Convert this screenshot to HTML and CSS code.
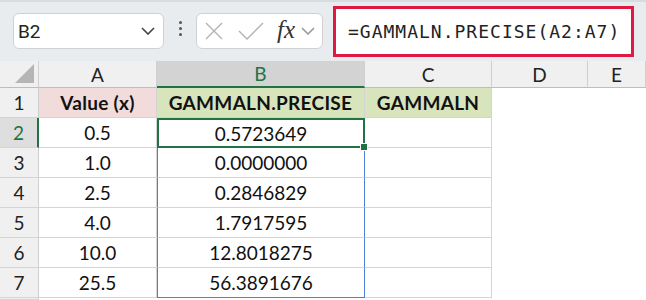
FILE: index.html
```html
<!DOCTYPE html>
<html lang="en">
<head>
    <meta charset="UTF-8">
    <title>GAMMALN.PRECISE</title>
    <link rel="stylesheet" href="styles.css">
</head>
<body>
    <div class="toolbar">
        <div class="namebox">
            <span class="cellref">B2</span>
            <svg class="chev" width="14" height="8" viewBox="0 0 14 8"><path d="M1 1 L7 7 L13 1" /></svg>
        </div>
        <div class="dots"><i></i><i></i><i></i></div>
        <div class="fxbox">
            <svg class="ico" width="18" height="18" viewBox="0 0 18 18"><path d="M1 1 L17 17 M17 1 L1 17" /></svg>
            <svg class="ico" width="26" height="18" viewBox="0 0 26 18"><path d="M1 9 L9 17 L25 1" /></svg>
            <span class="fx">fx</span>
            <svg class="chev light" width="14" height="8" viewBox="0 0 14 8"><path d="M1 1 L7 7 L13 1" /></svg>
        </div>
        <div class="formula">=GAMMALN.PRECISE(A2:A7)</div>
    </div>

    <div class="sheet">
        <div class="hd corner"><svg width="20" height="20" viewBox="0 0 20 20"><path d="M19 0 L19 19 L0 19 Z" /></svg></div>
        <div class="hd">A</div>
        <div class="hd sel">B</div>
        <div class="hd">C</div>
        <div class="hd">D</div>
        <div class="hd">E</div>

        <div class="rh">1</div>
        <div class="c bold pink">Value (x)</div>
        <div class="c bold green">GAMMALN.PRECISE</div>
        <div class="c bold green">GAMMALN</div>
        <div class="e"></div>
        <div class="e"></div>

        <div class="rh sel">2</div>
        <div class="c">0.5</div>
        <div class="c active">0.5723649<span class="handle"></span></div>
        <div class="c"></div>
        <div class="e"></div>
        <div class="e"></div>

        <div class="rh">3</div>
        <div class="c">1.0</div>
        <div class="c range">0.0000000</div>
        <div class="c"></div>
        <div class="e"></div>
        <div class="e"></div>

        <div class="rh">4</div>
        <div class="c">2.5</div>
        <div class="c range">0.2846829</div>
        <div class="c"></div>
        <div class="e"></div>
        <div class="e"></div>

        <div class="rh">5</div>
        <div class="c">4.0</div>
        <div class="c range">1.7917595</div>
        <div class="c"></div>
        <div class="e"></div>
        <div class="e"></div>

        <div class="rh">6</div>
        <div class="c">10.0</div>
        <div class="c range">12.8018275</div>
        <div class="c"></div>
        <div class="e"></div>
        <div class="e"></div>

        <div class="rh">7</div>
        <div class="c">25.5</div>
        <div class="c range last">56.3891676</div>
        <div class="c"></div>
        <div class="e"></div>
        <div class="e"></div>

        <div class="rh"></div>
        <div class="e"></div>
        <div class="e"></div>
        <div class="e"></div>
        <div class="e"></div>
        <div class="e"></div>
    </div>
</body>
</html>
```

FILE: styles.css
```css
* {
    box-sizing: border-box;
}
html, body {
    height: 300px;
    overflow: hidden;
}
body {
    margin: 0;
    background: #fff;
    font-family: Lato, "Noto Sans", sans-serif;
}

/* formula bar */
.toolbar {
    height: 61px;
    background: #e9ecef;
    border-top: 2px solid #d9dcdf;
    display: flex;
    align-items: flex-start;
    padding: 4px 0 0 13px;
}
.namebox {
    margin-top: 7px;
    width: 151px;
    height: 36px;
    background: #fff;
    border: 1px solid #cfd2d5;
    border-radius: 6px;
    display: flex;
    align-items: center;
    justify-content: space-between;
    padding: 0 8px 0 4px;
}
.cellref {
    font-family: Roboto, "Liberation Sans", sans-serif;
    font-size: 19px;
    color: #222;
}
.chev path {
    fill: none;
    stroke: #444;
    stroke-width: 1.6;
}
.chev.light path {
    stroke: #9a9a9a;
}
.dots {
    width: 32px;
    height: 44px;
    display: flex;
    flex-direction: column;
    align-items: center;
    justify-content: center;
    gap: 3px;
}
.dots i {
    width: 3px;
    height: 3px;
    border-radius: 50%;
    background: #555;
}
.fxbox {
    margin-top: 7px;
    width: 127px;
    height: 36px;
    background: #fff;
    border: 1px solid #cfd2d5;
    border-radius: 6px;
    display: flex;
    align-items: center;
    padding: 0 4px 0 8px;
}
.ico path {
    fill: none;
    stroke: #b3b3b3;
    stroke-width: 1.4;
}
.ico + .ico {
    margin-left: 15px;
}
.fx {
    font-family: "Liberation Serif", serif;
    font-style: italic;
    font-size: 25px;
    color: #333;
    margin: -2px 6px 0 13px;
}
.formula {
    margin-left: 10px;
    width: 301px;
    height: 51px;
    background: #fff;
    border: 3px solid #de1a43;
    font-family: "DejaVu Sans Mono", monospace;
    font-size: 18px;
    letter-spacing: 1px;
    color: #222;
    display: flex;
    align-items: center;
    padding-left: 12px;
}

/* grid */
.sheet {
    display: grid;
    grid-template-columns: 39px 118px 208px 127px 96px 58px;
    grid-template-rows: 27px repeat(7, 30px) 2px;
    font-size: 19px;
    color: #111;
}
.sheet > div {
    display: flex;
    align-items: center;
    justify-content: center;
}
.hd {
    background: #f0f0f0;
    border-right: 1px solid #cfcfcf;
    border-bottom: 1px solid #bdbdbd;
    color: #222;
}
.hd.sel {
    background: #d3d3d3;
    color: #217346;
    border-bottom: 2px solid #217346;
}
.corner {
    justify-content: flex-end !important;
    align-items: flex-end !important;
    padding: 0 3px 3px 0;
}
.corner path {
    fill: #b5b5b5;
}
.rh {
    background: #f0f0f0;
    border-right: 1px solid #cfcfcf;
    border-bottom: 1px solid #d4d4d4;
    color: #222;
}
.rh.sel {
    background: #dedede;
    color: #217346;
    border-right: 2px solid #217346;
}
.c {
    border-right: 1px solid #d4d4d4;
    border-bottom: 1px solid #d4d4d4;
}
.c.bold {
    font-weight: 700;
    letter-spacing: 0.3px;
}
.c.pink {
    background: #f2dcdb;
}
.c.green {
    background: #d8e4bc;
}
.c.active {
    position: relative;
    border: 2px solid #217346;
}
.handle {
    position: absolute;
    right: -5px;
    bottom: -5px;
    width: 8px;
    height: 8px;
    background: #217346;
    border: 1px solid #fff;
}
.c.range {
    border-left: 1px solid #4f7fd2;
    border-right: 1px solid #4f7fd2;
}
.c.range.last {
    border-bottom: 1px solid #4f7fd2;
}
```
